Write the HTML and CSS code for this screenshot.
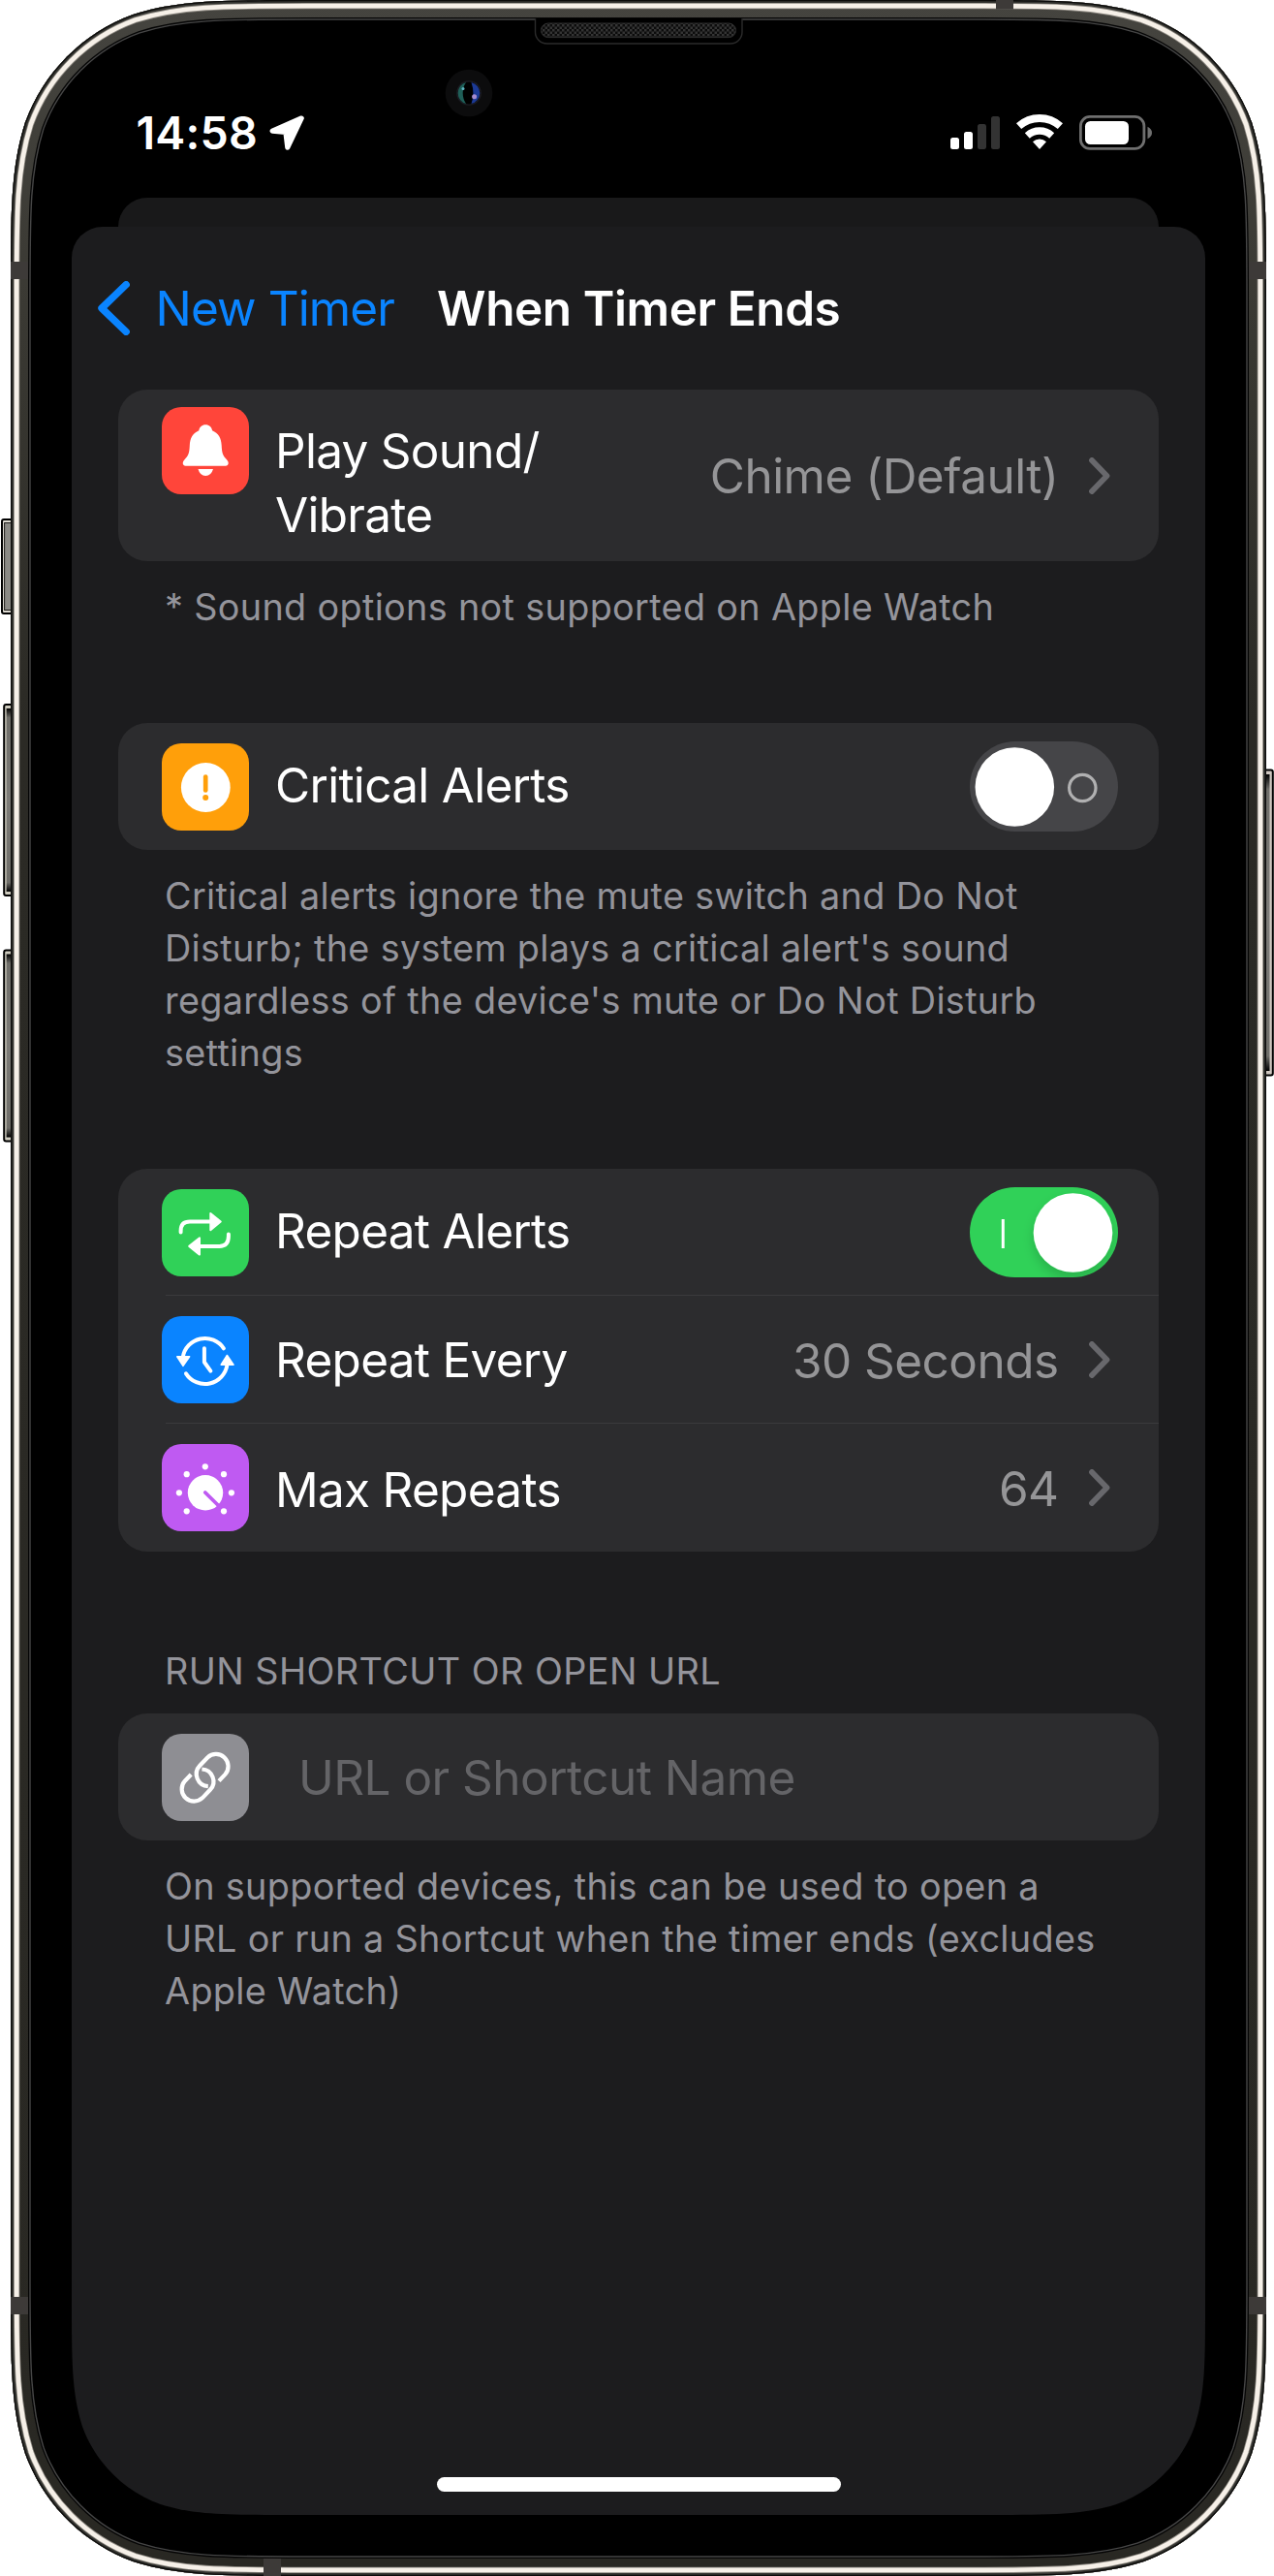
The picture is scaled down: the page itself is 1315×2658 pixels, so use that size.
FILE: index.html
```html
<!DOCTYPE html>
<html lang="en">
<head>
<meta charset="utf-8">
<title>When Timer Ends</title>
<link rel="stylesheet" href="styles.css">
</head>
<body>
<div class="device">
  <!-- Hardware: side buttons, steel band, antenna lines, earpiece and camera -->
  <svg class="hardware" viewBox="0 0 1315 2658" aria-hidden="true">
    <defs>
      <path id="body" d="M316.7 0H1001.3C1089.3 0 1133.3 0 1180.7 15C1232.4 33.8 1273.2 74.6 1292 126.3C1307 173.7 1307 217.7 1307 305.7V2352.3C1307 2440.3 1307 2484.3 1292 2531.7C1273.2 2583.4 1232.4 2624.2 1180.7 2643C1133.3 2658 1089.3 2658 1001.3 2658H316.7C228.7 2658 184.7 2658 137.3 2643C85.6 2624.2 44.8 2583.4 26 2531.7C11 2484.3 11 2440.3 11 2352.3V305.7C11 217.7 11 173.7 26 126.3C44.8 74.6 85.6 33.8 137.3 15C184.7 0 228.7 0 316.7 0Z"/>
      <clipPath id="bodyClip"><use href="#body"/></clipPath>
      <linearGradient id="band" x1="0" y1="0" x2="0" y2="1">
        <stop offset="0" stop-color="#45443f"/><stop offset=".12" stop-color="#3a3933"/><stop offset=".28" stop-color="#2b2a25"/><stop offset="1" stop-color="#292823"/>
      </linearGradient>
      <linearGradient id="btnL" x1="0" y1="0" x2="1" y2="0">
        <stop offset="0" stop-color="#8b8a85"/><stop offset=".7" stop-color="#8b8a85"/><stop offset="1" stop-color="#33322e"/>
      </linearGradient>
      <linearGradient id="btnEnds" x1="0" y1="0" x2="0" y2="1">
        <stop offset="0" stop-color="#000"/><stop offset=".05" stop-color="#6f6e69"/><stop offset=".5" stop-color="#7d7c78"/><stop offset=".95" stop-color="#6f6e69"/><stop offset="1" stop-color="#000"/>
      </linearGradient>
      <pattern id="mesh" width="5" height="5" patternUnits="userSpaceOnUse">
        <rect width="5" height="5" fill="#0c0c0c"/><rect width="2.5" height="2.5" fill="#343434"/><rect x="2.5" y="2.5" width="2.5" height="2.5" fill="#343434"/>
      </pattern>
    </defs>

    <g stroke="#000" stroke-width="2">
      <rect x="2" y="536" width="16" height="97" rx="2" fill="#dedbd2"/>
      <rect x="4.200" y="727" width="14" height="197" rx="2" fill="#d0cdc0"/>
      <rect x="4.200" y="980.500" width="14" height="197" rx="2" fill="#d0cdc0"/>
      <rect x="1298" y="794.500" width="15.800" height="315" rx="2" fill="#cfc7c0"/>
    </g>
    <g>
      <rect x="4.600" y="539.500" width="12" height="90" fill="url(#btnL)" stroke="#1b1a17"/>
      <rect x="6.600" y="731" width="9" height="189" fill="url(#btnEnds)"/>
      <rect x="6.600" y="984.500" width="9" height="189" fill="url(#btnEnds)"/>
      <rect x="1302" y="799" width="8.500" height="306" fill="url(#btnEnds)"/>
    </g>

    <g clip-path="url(#bodyClip)">
      <use href="#body" fill="#000"/>
      <g fill="none">
        <use href="#body" stroke="#464646" stroke-width="41.4"/>
        <use href="#body" stroke="#050505" stroke-width="38.6"/>
        <use href="#body" stroke="url(#band)" stroke-width="36"/>
        <use href="#body" stroke="#8d8982" stroke-width="18.6"/>
        <use href="#body" stroke="#f6f0e8" stroke-width="17"/>
        <use href="#body" stroke="#8d8982" stroke-width="7.6"/>
        <use href="#body" stroke="#33332f" stroke-width="6"/>
        <use href="#body" stroke="#0c0c0b" stroke-width="2.4"/>
      </g>
      <g fill="#3d3a38">
        <rect x="11" y="270" width="18" height="18"/>
        <rect x="1289" y="270" width="18" height="18"/>
        <rect x="11" y="2370" width="18" height="18"/>
        <rect x="1289" y="2370" width="18" height="18"/>
        <rect x="1028" y="0" width="18" height="9.5"/>
        <rect x="272" y="2640" width="18" height="18"/>
      </g>
    </g>

    <path d="M552.5 19V33a12 12 0 0 0 12 12H754a12 12 0 0 0 12-12V19" fill="#000" stroke="#2b2b2b" stroke-width="1.4"/>
    <rect x="558.5" y="24" width="201" height="14.6" rx="7.3" fill="url(#mesh)" stroke="#2e2e2e"/>
    <circle cx="484" cy="96" r="24.3" fill="#0c0c0d"/>
    <circle cx="484" cy="96" r="12.8" fill="#1d1d24"/>
    <circle cx="484" cy="96" r="11.4" fill="#000"/>
    <path d="M481 85a11.400 11.400 0 0 0 0 22a20 20 0 0 1 0-22z" fill="#1f5f58"/>
    <path d="M486.500 84.900a11.400 11.400 0 0 1 0 22.200a34 34 0 0 0 0-22.200z" fill="#1c3a96"/>
    <circle cx="489.600" cy="99.800" r="2.500" fill="#a58bd0"/>
    <circle cx="478" cy="91.500" r="1.500" fill="#5fb6c4"/>
  </svg>

  <main class="screen">
    <header class="status">
      <span class="status-time">14:58</span>
      <svg class="status-location" viewBox="0 0 36 36"><path d="M33.200 3L3.200 16.200L16.900 17.300L18.800 33.200Z" fill="#fff" stroke="#fff" stroke-width="5.200" stroke-linejoin="round"/></svg>
      <div class="status-icons">
        <svg width="51" height="38" viewBox="0 0 51 38">
          <g fill="#fff"><rect x="0" y="24" width="9" height="12" rx="2.500"/><rect x="14" y="18" width="9" height="18" rx="2.500"/></g>
          <g fill="#333"><rect x="28" y="10" width="9" height="26" rx="2.500"/><rect x="42" y="2" width="9" height="34" rx="2.500"/></g>
        </svg>
        <svg width="48" height="38" viewBox="0 0 48 38">
          <g fill="none" stroke="#fff"><path d="M2.600 12.200A32 32 0 0 1 45.400 12.200" stroke-width="7.800"/><path d="M11.300 21.900A19 19 0 0 1 36.700 21.900" stroke-width="7.400"/></g>
          <path d="M24 36L17 28.200A10.500 10.500 0 0 1 31 28.200Z" fill="#fff"/>
        </svg>
        <svg width="75" height="38" viewBox="0 0 75 38">
          <rect x="1.400" y="2.400" width="65.500" height="33" rx="9.500" fill="none" stroke="#6f6f6f" stroke-width="2.800"/>
          <rect x="6" y="7" width="45" height="24" rx="5.500" fill="#fff"/>
          <path d="M70.500 12.800Q75 15 75 19T70.500 25.200Z" fill="#6f6f6f"/>
        </svg>
      </div>
    </header>

    <div class="sheet-behind"></div>

    <section class="sheet">
      <nav class="nav">
        <svg class="nav-chevron" viewBox="0 0 33 56"><path d="M29.200 3.700L4 28L29.200 52.300" fill="none" stroke="#0a84ff" stroke-width="7.400" stroke-linecap="round" stroke-linejoin="round"/></svg>
        <a class="nav-back">New Timer</a>
        <h1 class="nav-title">When Timer Ends</h1>
      </nav>

      <div class="list">
        <div class="group">
          <div class="card">
            <div class="row row-tall">
              <svg class="tile tile-red" viewBox="0 0 90 90"><path d="M45.200 18.300c3.800 0 6.300 2.500 6.900 5.900C58.500 27 61.300 31.500 61.700 39.500C62 47 63 50.300 66.800 54C69.900 57 69 60.700 66 60.700H24.500C21.500 60.700 20.600 57 23.700 54C27.500 50.300 28.500 47 28.800 39.500C29.200 31.500 32 27 38.300 24.200C38.900 20.800 41.400 18.300 45.200 18.300Z" fill="#fff"/><path d="M37.500 64H53Q51 70.900 45.200 70.900T37.500 64Z" fill="#fff"/></svg>
              <span class="label">Play Sound/<br>Vibrate</span>
              <span class="value">Chime (Default)</span>
              <svg class="chevron" viewBox="0 0 22 38"><path d="M3 3L18.500 19L3 35" fill="none" stroke="#68686c" stroke-width="5.800" stroke-linecap="round" stroke-linejoin="round"/></svg>
            </div>
          </div>
          <p class="note">* Sound options not supported on Apple Watch</p>
        </div>

        <div class="group">
          <div class="card">
            <div class="row row-raised">
              <svg class="tile tile-orange" viewBox="0 0 90 90"><circle cx="45.300" cy="45.500" r="25.400" fill="#fff"/><path d="M45.200 34.500V48.500" stroke="#ff9f0a" stroke-width="4.700" stroke-linecap="round"/><circle cx="45.200" cy="56" r="3" fill="#ff9f0a"/></svg>
              <span class="label">Critical Alerts</span>
              <svg class="toggle" viewBox="0 0 153 93"><rect width="153" height="93" rx="46.500" fill="#454548"/><circle cx="116.300" cy="48" r="13.700" fill="none" stroke="#b0b0b1" stroke-width="3.200"/><circle cx="46.300" cy="47" r="40.800" fill="#fff"/></svg>
            </div>
          </div>
          <p class="note">Critical alerts ignore the mute switch and Do Not<br>Disturb; the system plays a critical alert's sound<br>regardless of the device's mute or Do Not Disturb<br>settings</p>
        </div>

        <div class="group">
          <div class="card">
            <div class="row row-divided row-raised">
              <svg class="tile tile-green" viewBox="0 0 90 90"><g fill="none" stroke="#fff" stroke-width="4" stroke-linecap="round"><path d="M19.600 44.500V43Q19.600 33.600 29 33.600H50"/><path d="M68.900 46.500V48.500Q68.900 58.900 59.500 58.900H39"/></g><g fill="#fff" stroke="#fff" stroke-width="2" stroke-linejoin="round"><path d="M50.300 25V42.300L60.800 33.600Z"/><path d="M39 50.300V67.600L28.200 58.900Z"/></g></svg>
              <span class="label">Repeat Alerts</span>
              <svg class="toggle" viewBox="0 0 153 93"><defs><filter id="knob" x="-30%" y="-30%" width="160%" height="160%"><feDropShadow dx="0" dy="6" stdDeviation="6" flood-opacity=".16"/></filter><clipPath id="track"><rect width="153" height="93" rx="46.500"/></clipPath></defs><g clip-path="url(#track)"><rect width="153" height="93" fill="#30d158"/><path d="M34.300 33V63" stroke="#fff" stroke-width="3"/><circle cx="106.500" cy="47" r="40.800" fill="#fff" filter="url(#knob)"/></g></svg>
            </div>
            <div class="row row-divided row-every">
              <svg class="tile tile-blue" viewBox="0 0 90 90"><g fill="none" stroke="#fff" stroke-width="4" stroke-linecap="round" stroke-linejoin="round"><path d="M63.900 33.300A23.200 23.200 0 0 0 21.700 42.500"/><path d="M25 59.300A23.200 23.200 0 0 0 67.500 50"/><path d="M43.900 33.300V47.500L50.400 56.700"/></g><g fill="#fff" stroke="#fff" stroke-width="1.600" stroke-linejoin="round"><path d="M15.800 41.800H28.600L22 51.400Z"/><path d="M61.200 50.200H74L67.400 40.500Z"/></g></svg>
              <span class="label">Repeat Every</span>
              <span class="value">30 Seconds</span>
              <svg class="chevron" viewBox="0 0 22 38"><path d="M3 3L18.500 19L3 35" fill="none" stroke="#68686c" stroke-width="5.800" stroke-linecap="round" stroke-linejoin="round"/></svg>
            </div>
            <div class="row row-max">
              <svg class="tile tile-purple" viewBox="0 0 90 90"><g fill="#fff"><circle cx="45" cy="50.300" r="18.200"/><circle cx="44.800" cy="23.300" r="3.100"/><circle cx="25.700" cy="31.200" r="3.100"/><circle cx="64" cy="31.200" r="3.100"/><circle cx="17.900" cy="50.300" r="3.100"/><circle cx="71.900" cy="50.300" r="3.100"/><circle cx="25.700" cy="69.300" r="3.100"/><circle cx="64" cy="69.300" r="3.100"/></g><path d="M44.800 50L60 65" stroke="#bf5af2" stroke-width="3.800" stroke-linecap="round"/></svg>
              <span class="label">Max Repeats</span>
              <span class="value">64</span>
              <svg class="chevron" viewBox="0 0 22 38"><path d="M3 3L18.500 19L3 35" fill="none" stroke="#68686c" stroke-width="5.800" stroke-linecap="round" stroke-linejoin="round"/></svg>
            </div>
          </div>
        </div>

        <div class="group">
          <h2 class="group-title">RUN SHORTCUT OR OPEN URL</h2>
          <div class="card">
            <div class="row">
              <svg class="tile tile-gray" viewBox="0 0 90 90"><g fill="none" stroke="#fff" stroke-width="4.200" stroke-linecap="butt"><path d="M47.800 54.100A12.600 12.600 0 0 1 39.300 32.800L47.200 24.500A12.600 12.600 0 0 1 65.400 41.900L59 48.600"/><path d="M41.400 36.500A12.600 12.600 0 0 1 49.900 57.800L42 66.100A12.600 12.600 0 0 1 23.800 48.700L30.200 42"/></g></svg>
              <input class="field" type="text" placeholder="URL or Shortcut Name">
            </div>
          </div>
          <p class="note">On supported devices, this can be used to open a<br>URL or run a Shortcut when the timer ends (excludes<br>Apple Watch)</p>
        </div>
      </div>

      <div class="home-indicator"></div>
    </section>
  </main>
</div>
</body>
</html>
```
FILE: styles.css
```css
* { box-sizing: border-box; }

body {
  margin: 0;
  background: #fff;
  font-family: Inter, "Liberation Sans", sans-serif;
  color: #fff;
}

svg { display: block; flex: none; }

.device {
  position: relative;
  width: 1315px;
  height: 2658px;
  padding: 63px 71px 63px 74px;
  overflow: hidden;
}

.hardware {
  position: absolute;
  inset: 0;
  width: 1315px;
  height: 2658px;
}

.screen {
  position: relative;
  display: flex;
  flex-direction: column;
  width: 1170px;
  height: 2532px;
  clip-path: path("M0 0H1170V2310.3C1170 2374.2 1170 2406.1 1159.1 2440.4C1145.5 2477.9 1115.9 2507.5 1078.4 2521.1C1044.1 2532 1012.2 2532 948.3 2532H221.7C157.8 2532 125.9 2532 91.6 2521.1C54.1 2507.5 24.5 2477.9 10.9 2440.4C0 2406.1 0 2374.2 0 2310.3Z");
}

/* Status bar */
.status {
  display: flex;
  align-items: center;
  height: 141px;
  padding: 7px 55px 0 66.5px;
}

.status-time {
  font-size: 46.5px;
  font-weight: 600;
  letter-spacing: 0.2px;
  line-height: 56px;
}

.status-location {
  width: 36px;
  height: 36px;
  margin-left: 12.5px;
}

.status-icons {
  display: flex;
  gap: 17px;
  margin-left: auto;
}

/* Stacked sheets */
.sheet-behind {
  height: 30px;
  margin: 0 48px;
  border-radius: 30px 30px 0 0;
  background: #19191a;
}

.sheet {
  display: flex;
  flex: 1;
  flex-direction: column;
  border-radius: 32px 32px 0 0;
  background: #1c1c1e;
}

.nav {
  display: flex;
  align-items: center;
  height: 168px;
  padding-left: 27px;
  white-space: nowrap;
}

.nav-chevron {
  width: 33px;
  height: 56px;
}

.nav-back {
  margin-left: 26.5px;
  color: #0a84ff;
  font-size: 49.5px;
  letter-spacing: -0.88px;
}

.nav-title {
  margin: 0 0 0 44px;
  font-size: 49.5px;
  font-weight: 600;
  letter-spacing: -0.43px;
}

/* Grouped list */
.list {
  display: flex;
  flex: 1;
  flex-direction: column;
  gap: 93px;
  padding: 0 48px;
}

.card {
  overflow: hidden;
  border-radius: 30px;
  background: #2c2c2e;
}

.row {
  display: flex;
  align-items: center;
  height: 131px;
  padding: 0 50px 0 45px;
}

.row-tall {
  height: 177px;
}

.row-tall .tile {
  align-self: flex-start;
  margin-top: 18px;
}

.row-every,
.row-max {
  height: 132px;
}

.row-divided {
  background: linear-gradient(#3a3a3c, #3a3a3c) 49px 100% / 100% 1px no-repeat;
}

.row-raised .label { margin-bottom: 3px; }

.row-max .label { margin-top: 4px; }

.row-every .value,
.row-max .value { margin-top: 2px; }

.tile {
  width: 90px;
  height: 90px;
  border-radius: 20px;
}

.tile-red { background: #ff453a; }
.tile-orange { background: #ff9f0a; }
.tile-green { background: #30d158; }
.tile-blue { background: #0a84ff; }
.tile-purple { background: #bf5af2; }
.tile-gray { background: #8e8e93; }

.label {
  margin-left: 27px;
  font-size: 49.5px;
  letter-spacing: -0.72px;
  line-height: 66px;
  white-space: nowrap;
}

.row-tall .label {
  margin-top: 15px;
}

.value {
  margin-left: auto;
  color: #959597;
  font-size: 49.5px;
  letter-spacing: -0.54px;
  line-height: 66px;
  white-space: nowrap;
}

.chevron {
  width: 22px;
  height: 38px;
  margin-left: 31.5px;
}

.toggle {
  width: 153px;
  height: 93px;
  margin: 0 -8px 0 auto;
}

.field {
  flex: 1;
  margin-left: 51px;
  padding: 0;
  border: 0;
  outline: 0;
  background: none;
  color: #fff;
  font: 49.5px/66px Inter, "Liberation Sans", sans-serif;
  letter-spacing: -0.54px;
}

.field::placeholder { color: #646467; }

.group-title,
.note {
  padding-left: 48px;
  color: #94949b;
  font-size: 37.8px;
  font-weight: 400;
  line-height: 54px;
  white-space: nowrap;
}

.group-title {
  margin: 3px 0 17px;
  letter-spacing: 0.43px;
}

.note {
  margin: 20px 0 0;
  letter-spacing: 0.32px;
}

.home-indicator {
  align-self: center;
  width: 417px;
  height: 15px;
  margin-bottom: 24px;
  border-radius: 8px;
  background: #fff;
}
```
